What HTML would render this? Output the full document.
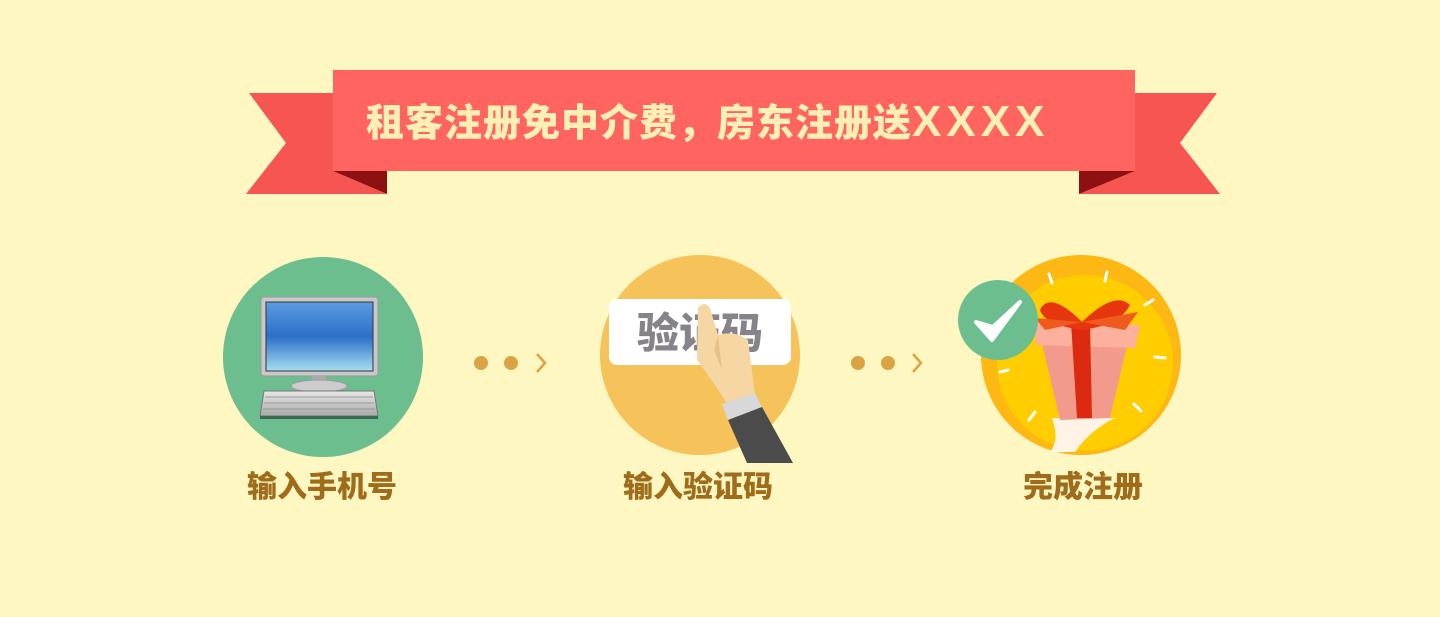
<!DOCTYPE html>
<html><head><meta charset="utf-8"><style>
html,body{margin:0;padding:0;}
body{width:1440px;height:617px;background:#fef7c1;position:relative;overflow:hidden;font-family:"Liberation Sans","Noto Sans CJK SC",sans-serif;}
.t{position:absolute;white-space:nowrap;font-weight:900;}
.lab{color:#9e6c1b;font-size:30px;top:462px;transform:translateX(-50%);letter-spacing:0px}
</style></head><body>
<svg width="1440" height="617" style="position:absolute;left:0;top:0">
<polygon points="249,93 333,93 333,171 387,194 246,194 286,143" fill="#f75552"/>
<polygon points="333,171 387,171 387,194" fill="#8f1010"/>
<polygon points="1217,93 1135,93 1135,171 1079,194 1220,194 1180,143" fill="#f75552"/>
<polygon points="1135,171 1079,171 1079,194" fill="#8f1010"/>
<rect x="333" y="70" width="802" height="101" fill="#ff6461"/>
<circle cx="323" cy="357" r="100" fill="#6dbe8f"/>
<circle cx="700" cy="355" r="100" fill="#f6c25a"/>
<circle cx="1081" cy="355" r="100" fill="#fdb813"/>
<circle cx="1085" cy="363" r="88" fill="#ffcd00"/>
<circle cx="481" cy="363" r="7" fill="#dba443"/><circle cx="511" cy="363" r="7" fill="#dba443"/>
<polyline points="537,354 545,363 537,372" fill="none" stroke="#dba443" stroke-width="2.5"/>
<circle cx="858" cy="363" r="7" fill="#dba443"/><circle cx="888" cy="363" r="7" fill="#dba443"/>
<polyline points="913,354 921,363 913,372" fill="none" stroke="#dba443" stroke-width="2.5"/>
<defs><linearGradient id="sc" x1="0" y1="0" x2="0" y2="1"><stop offset="0" stop-color="#5d9be0"/><stop offset=".5" stop-color="#2b6fc8"/><stop offset="1" stop-color="#a9def0"/></linearGradient>
<linearGradient id="kb" x1="0" y1="0" x2="0" y2="1"><stop offset="0" stop-color="#e8e8e8"/><stop offset="1" stop-color="#a8a8a8"/></linearGradient></defs>
<rect x="261" y="297" width="117" height="79" rx="3" fill="#c8c8c8" stroke="#999"/>
<rect x="266" y="302" width="107" height="69" fill="url(#sc)" stroke="#333"/>
<rect x="312" y="376" width="14" height="10" fill="#aaa"/>
<ellipse cx="319" cy="386" rx="28" ry="6" fill="#ccc" stroke="#999"/>
<polygon points="264,391 374,391 378,416 260,416" fill="url(#kb)" stroke="#777"/>
<g stroke="#999" stroke-width="1"><line x1="265" y1="397" x2="373" y2="397"/><line x1="264" y1="403" x2="374" y2="403"/><line x1="263" y1="409" x2="375" y2="409"/></g>
<rect x="260" y="416" width="118" height="3" fill="#3c6a4e"/>
<rect x="609" y="299" width="182" height="66" rx="8" fill="#fff"/>
<text x="700" y="348" text-anchor="middle" font-size="42" font-weight="900" fill="#87838b" font-family="Liberation Sans, Noto Sans CJK SC, sans-serif">验证码</text>
<path d="M698,308 Q704,300 710,308 L718,335 Q735,330 748,340 L755,395 L728,405 Q712,380 697,360 Z" fill="#f6d6a2"/>
<path d="M718,335 L722,370 L714,350 Z" fill="#e6c28a"/>
<polygon points="722,404 755,393 762,407 728,420" fill="#d8d8d8"/>
<polygon points="728,420 762,407 793,463 747,463" fill="#4b4b4b"/>
<g stroke="#fff" stroke-width="3" stroke-linecap="round">
<line x1="1049" y1="274" x2="1052" y2="283"/><line x1="1107" y1="272" x2="1105" y2="281"/>
<line x1="1145" y1="305" x2="1153" y2="300"/><line x1="1155" y1="357" x2="1165" y2="358"/>
<line x1="1134" y1="404" x2="1141" y2="411"/><line x1="1029" y1="420" x2="1035" y2="412"/>
<line x1="1008" y1="370" x2="1000" y2="372"/></g>
<path d="M1052,418 Q1060,440 1050,452 L1075,452 Q1090,430 1115,418 Z" fill="#fff3e6"/>
<polygon points="1040,335 1060,420 1110,418 1130,333" fill="#f29a8b"/>
<polygon points="1034,320 1140,325 1135,348 1036,345" fill="#fdb09c"/>
<polygon points="1071,322 1090,322 1092,418 1077,418" fill="#dc2a10"/>
<path d="M1082,322 Q1050,290 1040,310 Q1045,325 1082,330 Q1120,325 1130,305 Q1115,290 1082,322Z" fill="#e7360e"/>
<path d="M1082,322 L1138,312 L1125,330Z M1082,322 L1035,318 L1045,330Z" fill="#f05a1d"/>
<circle cx="998" cy="320" r="40" fill="#6dbe8f"/>
<path d="M976,322 L992,340 L1020,302 L993,327 Z" fill="#fff" stroke="#fff" stroke-width="4" stroke-linejoin="round"/>
</svg>
<div class="t" style="left:366px;top:92px;font-size:38px;color:#fef0b5;letter-spacing:1px">租客注册免中介费，房东注册送<span style="font-size:44px;letter-spacing:5px;line-height:38px">XXXX</span></div>
<div class="t lab" style="left:322px">输入手机号</div>
<div class="t lab" style="left:698px">输入验证码</div>
<div class="t lab" style="left:1083px">完成注册</div>
</body></html>
